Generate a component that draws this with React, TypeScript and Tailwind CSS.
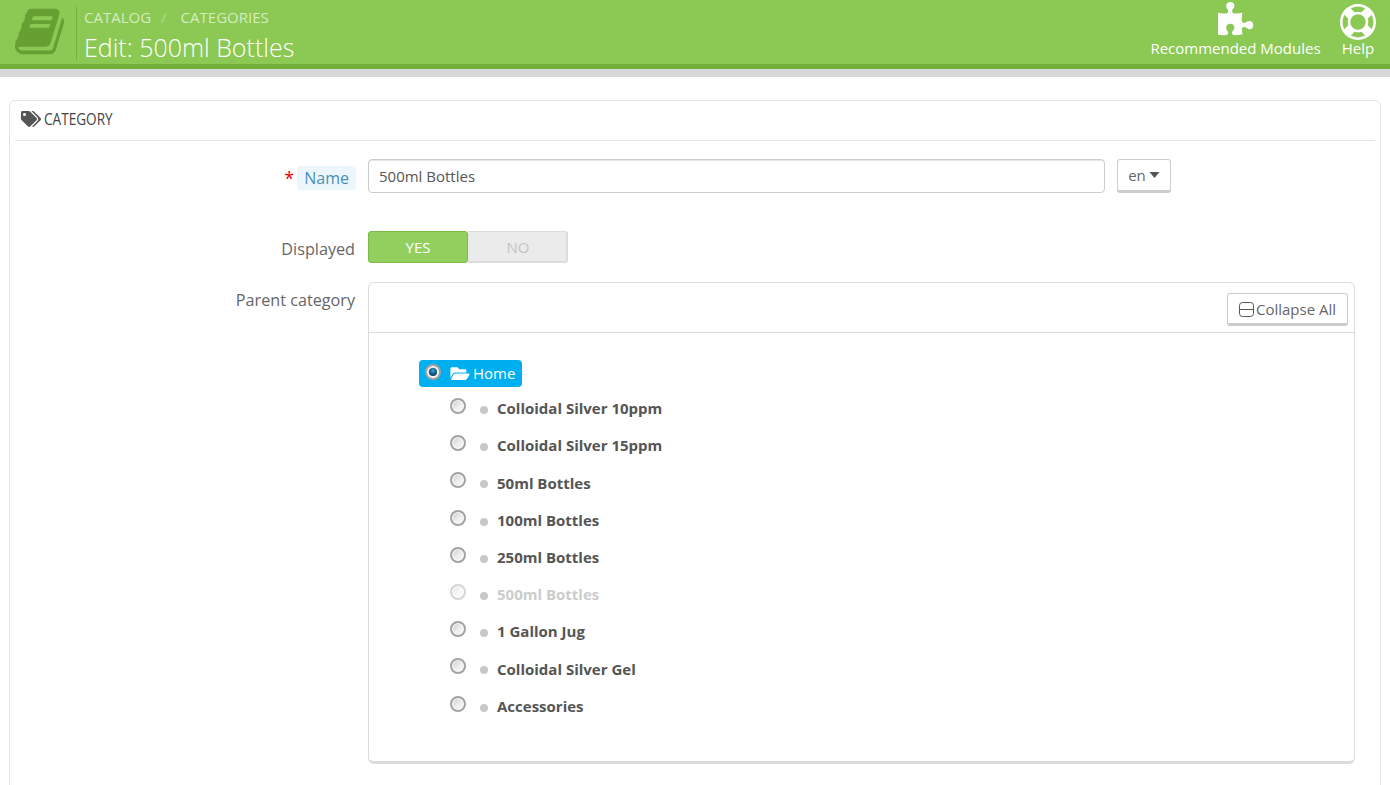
const treeItems = [
  { name: 'Colloidal Silver 10ppm' },
  { name: 'Colloidal Silver 15ppm' },
  { name: '50ml Bottles' },
  { name: '100ml Bottles' },
  { name: '250ml Bottles' },
  { name: '500ml Bottles', disabled: true },
  { name: '1 Gallon Jug' },
  { name: 'Colloidal Silver Gel' },
  { name: 'Accessories' },
];

function BookIcon() {
  return (
    <svg viewBox="0 0 1792 1792" className="w-[53px] h-[53px] fill-[#66a033]">
      <path d="M1639 478q40 57 18 129l-275 906q-19 64-76.5 107.5t-122.5 43.5h-923q-77 0-148.5-53.5t-99.5-131.5q-24-67-2-127 0-4 3-27t4-37q1-8-3-21.5t-3-19.5q2-11 8-21t16.5-23.5 16.5-23.5q23-38 45-91.5t30-91.5q3-10 .5-30t-.5-28q3-11 17-28t17-23q21-36 42-92t25-90q1-9-2.5-32t.5-28q4-13 22-30.5t22-22.5q19-26 42.5-84.5t27.5-96.5q1-8-3-25.5t-2-26.5q2-8 9-18t18-23 17-21q8-12 16.5-30.5t15-35 16-36 19.5-32 26.5-23.5 36-11.5 47.5 5.5l-1 3q38-9 51-9h761q74 0 114 56t18 130l-274 906q-36 119-71.5 153.5t-128.5 34.5h-869q-27 0-38 15-11 16-1 43 24 70 144 70h923q29 0 56-15.5t35-41.5l300-987q7-22 5-57 38 15 59 43zm-1064 2q-4 13 2 22.5t20 9.5h608q13 0 25.5-9.5t16.5-22.5l21-64q4-13-2-22.5t-20-9.5h-608q-13 0-25.5 9.5t-16.5 22.5zm-83 256q-4 13 2 22.5t20 9.5h608q13 0 25.5-9.5t16.5-22.5l21-64q4-13-2-22.5t-20-9.5h-608q-13 0-25.5 9.5t-16.5 22.5z" />
    </svg>
  );
}

function PuzzleIcon() {
  return (
    <svg viewBox="0 0 1792 1792" className="w-[38px] h-[38px] fill-white">
      <path d="M1664 1098q0 81-44.5 135t-123.5 54q-41 0-77.5-17.5t-59-38-56.5-38-71-17.5q-110 0-110 124 0 39 16 115t15 115v5q-22 0-33 1-34 3-97.5 11.5t-115.5 13.5-98 5q-61 0-103-26.5t-42-83.5q0-37 17.5-71t38-56.5 38-59 17.5-77.5q0-79-54-123.5t-135-44.5q-84 0-143 45.5t-59 127.5q0 43 15 83t33.5 64.5 33.5 53 15 50.5q0 45-46 89-37 35-117 35-95 0-245-24-9-2-27.5-4t-27.5-4l-13-2q-1 0-3-1-2 0-2-1v-1024q2 1 17.5 3.5t34 5 21.5 3.5q150 24 245 24 80 0 117-35 46-44 46-89 0-22-15-50.5t-33.5-53-33.5-64.5-15-83q0-82 59-127.5t144-45.5q80 0 134 44.5t54 123.5q0 41-17.5 77.5t-38 59-38 56.5-17.5 71q0 57 42 83.5t103 26.5q64 0 180-15t163-17v2q-1 2-3.5 17.5t-5 34-3.5 21.5q-24 150-24 245 0 80 35 117 44 46 89 46 22 0 50.5-15t53-33.5 64.5-33.5 83-15q82 0 127.5 59t45.5 143z" />
    </svg>
  );
}

function LifeRingIcon() {
  return (
    <svg viewBox="0 0 1792 1792" className="w-[36px] h-[36px] fill-white">
      <path d="M896 0q182 0 348 71t286 191 191 286 71 348-71 348-191 286-286 191-348 71-348-71-286-191-191-286-71-348 71-348 191-286 286-191 348-71zm0 128q-190 0-361 90l194 194q82-28 167-28t167 28l194-194q-171-90-361-90zm-678 1129l194-194q-28-82-28-167t28-167l-194-194q-90 171-90 361t90 361zm678 407q190 0 361-90l-194-194q-82 28-167 28t-167-28l-194 194q171 90 361 90zm0-384q159 0 271.5-112.5t112.5-271.5-112.5-271.5-271.5-112.5-271.5 112.5-112.5 271.5 112.5 271.5 271.5 112.5zm484-217l194 194q90-171 90-361t-90-361l-194 194q28 82 28 167t-28 167z" />
    </svg>
  );
}

function TagsIcon() {
  return (
    <svg viewBox="0 0 640 512" className="w-[20px] h-[16px] fill-[#555]">
      <path d="M497.9 225.9L286.1 14.1A48 48 0 0 0 252.1 0H48C21.5 0 0 21.5 0 48v204.1a48 48 0 0 0 14.1 33.9l211.9 211.9c18.7 18.7 49.1 18.7 67.9 0l204.1-204.1c18.7-18.7 18.7-49.1 0-67.9zM112 160c-26.5 0-48-21.5-48-48s21.5-48 48-48 48 21.5 48 48-21.5 48-48 48zm513.9 133.8L421.8 497.9c-18.7 18.7-49.1 18.7-67.9 0l-.4-.4L527.6 323.5c17-17 26.4-39.6 26.4-63.6s-9.4-46.6-26.4-63.6L331.4 0h48.7a48 48 0 0 1 33.9 14.1l211.9 211.9c18.7 18.7 18.7 49.1 0 67.8z" />
    </svg>
  );
}

function FolderOpenIcon() {
  return (
    <svg viewBox="0 0 576 512" className="w-[20px] h-[17px] fill-white">
      <path d="M572.7 292.1L500.3 416.2A64 64 0 0 1 445 448H45c-18.500 0-30.100-20.100-20.700-36.100l72.400-124.200A64 64 0 0 1 152 256h400c18.500 0 30.100 20.100 20.700 36.100zM152 224h328v-48c0-26.500-21.500-48-48-48H272l-64-64H48C21.500 64 0 85.500 0 112v278l69.100-118.400C86.200 242.300 118 224 152 224z" />
    </svg>
  );
}

function Radio({ checked, disabled }: { checked?: boolean; disabled?: boolean }) {
  return (
    <span
      className={`w-4 h-4 rounded-full border-2 border-[#a3a3a3] flex items-center justify-center shrink-0 bg-[linear-gradient(135deg,#c9c9ce_0%,#eeeef0_55%,#f8f8f8_100%)] shadow-[inset_0_0_0_1px_#ffffff] ${
        disabled ? 'opacity-45' : ''
      }`}
    >
      {checked && (
        <span className="w-[8px] h-[8px] rounded-full bg-[radial-gradient(circle_at_50%_35%,#3fa3d8_0%,#0f5b85_50%,#08283c_100%)]" />
      )}
    </span>
  );
}

function Header() {
  return (
    <header className="h-[69px] shrink-0 bg-[#8bc954] border-b-[5px] border-[#72b03a] flex justify-between">
      <div className="flex">
        <div className="pl-[15px] pt-[5px] w-[76px] shrink-0">
          <BookIcon />
        </div>
        <div className="mt-[7px] h-[53px] border-l border-[#72b03a] pl-[7px]">
          <div className="flex text-[15px] leading-[20px] text-[#d5ecbf]">
            <span>CATALOG</span>
            <span className="ml-[10px] mr-[14px] text-[#b0d98a]">/</span>
            <span>CATEGORIES</span>
          </div>
          <h1 className="text-[25px] leading-[32px] mt-[4px] text-white font-light">Edit: 500ml Bottles</h1>
        </div>
      </div>
      <div className="flex text-white text-[15px]">
        <div className="flex flex-col items-center w-[171px]">
          <div className="h-[39px] pt-[2px] pl-[3px]">
            <PuzzleIcon />
          </div>
          <span className="leading-[18px] whitespace-nowrap">Recommended Modules</span>
        </div>
        <div className="flex flex-col items-center ml-[19px] mr-[14px] w-[36px]">
          <div className="h-[39px] pt-[4px]">
            <LifeRingIcon />
          </div>
          <span className="leading-[18px]">Help</span>
        </div>
      </div>
    </header>
  );
}

function CategoryTree() {
  return (
    <div className="w-[987px] h-[482px] border border-[#dcdcdc] border-b-[3px] rounded-[6px] bg-white">
      <div className="h-[50px] border-b border-[#dcdcdc] flex justify-end pt-[10px] pr-[6px]">
        <button className="w-[121px] h-[33px] pt-px border border-[#cccccc] border-b-[3px] rounded-[3px] bg-white flex items-center justify-center gap-[2px] text-[15px] text-[#666]">
          <svg viewBox="0 0 15 15" className="w-[15px] h-[15px] fill-none stroke-[#555]">
            <rect x="0.500" y="0.500" width="14" height="14" rx="3" />
            <path d="M0.500 7.500H14.500" />
          </svg>
          Collapse All
        </button>
      </div>
      <div className="pt-[27px] pl-[50px]">
        <div className="w-[103px] h-[27px] bg-[#00aff0] rounded-[4px] flex items-center pl-[6px] text-white text-[15px] leading-none">
          <span className="mb-[4px]">
            <Radio checked />
          </span>
          <span className="ml-[9px] mb-[1px]">
            <FolderOpenIcon />
          </span>
          <span className="ml-[3px]">Home</span>
        </div>
        <ul className="pl-[31px] pt-[2.75px]">
          {treeItems.map((item) => (
            <li key={item.name} className="h-[37.23px] flex items-center">
              <span className="mb-[5px]">
                <Radio disabled={item.disabled} />
              </span>
              <span className="w-[8px] h-[8px] rounded-full bg-[#c8c8c8] ml-[14px] mt-[3px] shrink-0" />
              <span className={`ml-[9px] text-[15px] font-bold ${item.disabled ? 'text-[#cccccc]' : 'text-[#555]'}`}>
                {item.name}
              </span>
            </li>
          ))}
        </ul>
      </div>
    </div>
  );
}

export default function App() {
  return (
    <div className="h-screen overflow-hidden bg-white flex flex-col font-['Open_Sans',sans-serif] text-[#666]">
      <Header />
      <div className="h-[8px] bg-[#d8d8d8] shrink-0" />

      <div className="px-[9px] pt-[23px] flex-1">
        <div className="w-[1372px] h-[800px] border border-[#e2e2e2] rounded-[6px] px-[5px]">
          <div className="h-[40px] border-b border-[#e6e6e6] flex items-center gap-[3px] pl-[6px] pb-[3px]">
            <TagsIcon />
            <span className="inline-block origin-left scale-x-[0.85] text-[16px] font-medium text-[#444]">CATEGORY</span>
          </div>

          <div className="flex flex-col">
            <div className="flex mt-[18px] h-[72px]">
              <div className="w-[341px] flex justify-end items-start pt-[7px] shrink-0">
                <span className="text-[#e00] text-[18px] leading-[24px] mr-[3px]">*</span>
                <span className="bg-[#edf6fb] text-[#4a8fb8] text-[16px] leading-[24px] px-[7px] rounded-[3px]">Name</span>
              </div>
              <input
                readOnly
                value="500ml Bottles"
                className="ml-[12px] w-[737px] h-[34px] border border-[#cccccc] rounded-[4px] px-[10px] text-[15px] text-[#555] shadow-[inset_0_1px_1px_rgba(0,0,0,0.1)]"
              />
              <button className="ml-[12px] w-[54px] h-[34px] border border-[#cccccc] border-b-[3px] rounded-[3px] flex items-center justify-center gap-[3px] text-[15px] text-[#666]">
                en
                <svg viewBox="0 0 10 6" className="w-[11px] h-[6px] fill-[#555]">
                  <path d="M0 0h10L5 6z" />
                </svg>
              </button>
            </div>

            <div className="flex h-[51px]">
              <div className="w-[340px] mr-px shrink-0 text-right text-[16.2px] pt-[6px]">Displayed</div>
              <div className="ml-[12px] w-[200px] h-[32px] flex text-[15px]">
                <span className="w-[100px] bg-[#93cf5f] border border-[#7dba48] rounded-[3px] text-white flex items-center justify-center">YES</span>
                <span className="w-[100px] pl-[2px] pt-px bg-[#ebebeb] border border-[#dcdcdc] border-b-2 border-r-2 border-l-0 rounded-r-[3px] text-[#c4c4c4] flex items-center justify-center">NO</span>
              </div>
            </div>

            <div className="flex">
              <div className="w-[340px] mr-px shrink-0 text-right text-[16.2px] pt-[6px]">Parent category</div>
              <div className="ml-[12px]">
                <CategoryTree />
              </div>
            </div>
          </div>
        </div>
      </div>
    </div>
  );
}
